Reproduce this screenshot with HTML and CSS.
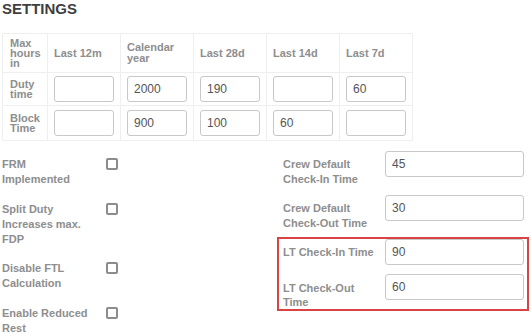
FILE: index.html
```html
<!DOCTYPE html>
<html lang="en">
<head>
  <meta charset="UTF-8">
  <meta name="viewport" content="width=device-width, initial-scale=1.0">
  <title>Settings</title>
  <link rel="stylesheet" href="styles.css">
</head>
<body>
  <h2 class="title">SETTINGS</h2>

  <table class="limits">
    <colgroup>
      <col class="col-head">
      <col><col><col><col><col>
    </colgroup>
    <thead>
      <tr>
        <th class="row-head">Max hours in</th>
        <th>Last 12m</th>
        <th>Calendar year</th>
        <th>Last 28d</th>
        <th>Last 14d</th>
        <th>Last 7d</th>
      </tr>
    </thead>
    <tbody>
      <tr>
        <th class="row-head">Duty time</th>
        <td><input type="text" value=""></td>
        <td><input type="text" value="2000"></td>
        <td><input type="text" value="190"></td>
        <td><input type="text" value=""></td>
        <td><input type="text" value="60"></td>
      </tr>
      <tr>
        <th class="row-head">Block Time</th>
        <td><input type="text" value=""></td>
        <td><input type="text" value="900"></td>
        <td><input type="text" value="100"></td>
        <td><input type="text" value="60"></td>
        <td><input type="text" value=""></td>
      </tr>
    </tbody>
  </table>

  <div class="options">
    <div class="flags">
      <label class="flag"><span>FRM Implemented</span><input type="checkbox"></label>
      <label class="flag"><span>Split Duty Increases max. FDP</span><input type="checkbox"></label>
      <label class="flag"><span>Disable FTL Calculation</span><input type="checkbox"></label>
      <label class="flag"><span>Enable Reduced Rest</span><input type="checkbox"></label>
    </div>

    <div class="times">
      <div class="time-row">
        <label>Crew Default Check-In Time</label>
        <input type="text" value="45">
      </div>
      <div class="time-row">
        <label>Crew Default Check-Out Time</label>
        <input type="text" value="30">
      </div>
      <div class="highlight">
        <div class="time-row">
          <label>LT Check-In Time</label>
          <input type="text" value="90">
        </div>
        <div class="time-row last">
          <label>LT Check-Out Time</label>
          <input type="text" value="60">
        </div>
      </div>
    </div>
  </div>
</body>
</html>
```

FILE: styles.css
```css
body {
  font-family: 'Liberation Sans', Arial, sans-serif;
  background: #fff;
  margin: 0;
  padding: 0 2px;
  color: #8e8e8e;
}
.title {
  font-size: 15px;
  line-height: 18px;
  font-weight: bold;
  color: #3f3f3f;
  margin: 0 0 15px 0;
}
input[type="text"] {
  box-sizing: border-box;
  height: 26px;
  padding: 0 6px;
  border: 1px solid #c8c8c8;
  border-radius: 3px;
  font-family: inherit;
  font-size: 12px;
  color: #555;
  background: #fff;
}
.limits {
  table-layout: fixed;
  width: 411px;
  border-collapse: collapse;
}
.limits col {
  width: 73px;
}
.limits col.col-head {
  width: 45px;
}
.limits th, .limits td {
  border: 1px solid #efefef;
  text-align: left;
  vertical-align: middle;
}
.limits th {
  font-size: 11px;
  font-weight: bold;
  line-height: 11px;
  padding: 4px 6px;
  color: #8e8e8e;
}
.limits th.row-head {
  line-height: 10px;
  padding: 4px 7px;
}
.limits td {
  padding: 3px 6px;
}
.limits td input {
  width: 100%;
  display: block;
}
.limits tbody tr:last-child td {
  padding-top: 4px;
  padding-bottom: 4px;
}
.options {
  display: flex;
  margin-top: 10px;
}
.flags {
  width: 275px;
  padding-top: 6px;
}
.flag {
  display: flex;
  align-items: flex-start;
  margin-bottom: 15px;
  font-size: 11px;
  font-weight: bold;
  line-height: 15px;
}
.flag:nth-child(2) {
  margin-bottom: 14px;
}
.flag:last-child {
  margin-bottom: 0;
}
.flag span {
  width: 90px;
  margin-right: 14px;
}
.flag input {
  appearance: none;
  -webkit-appearance: none;
  box-sizing: border-box;
  width: 12px;
  height: 12px;
  margin: 1px 0 0 0;
  border: 2px solid #8c8c8c;
  border-radius: 2px;
  background: #fff;
}
.times {
  width: 252px;
}
.time-row {
  display: flex;
  align-items: flex-start;
  padding-left: 6px;
  margin-bottom: 8px;
}
.time-row label {
  width: 96px;
  margin-right: 6px;
  padding-top: 6px;
  font-size: 11px;
  font-weight: bold;
  line-height: 15px;
}
.time-row input {
  width: 139px;
}
.highlight {
  border: 2px solid #d94442;
  margin-top: -2px;
  padding: 0 3px 0 4px;
}
.highlight .time-row {
  padding-left: 0;
  margin-bottom: 9px;
}
.highlight .time-row.last {
  margin-bottom: 0;
}
.highlight .time-row.last label {
  padding-top: 7px;
  line-height: 14px;
}
```
